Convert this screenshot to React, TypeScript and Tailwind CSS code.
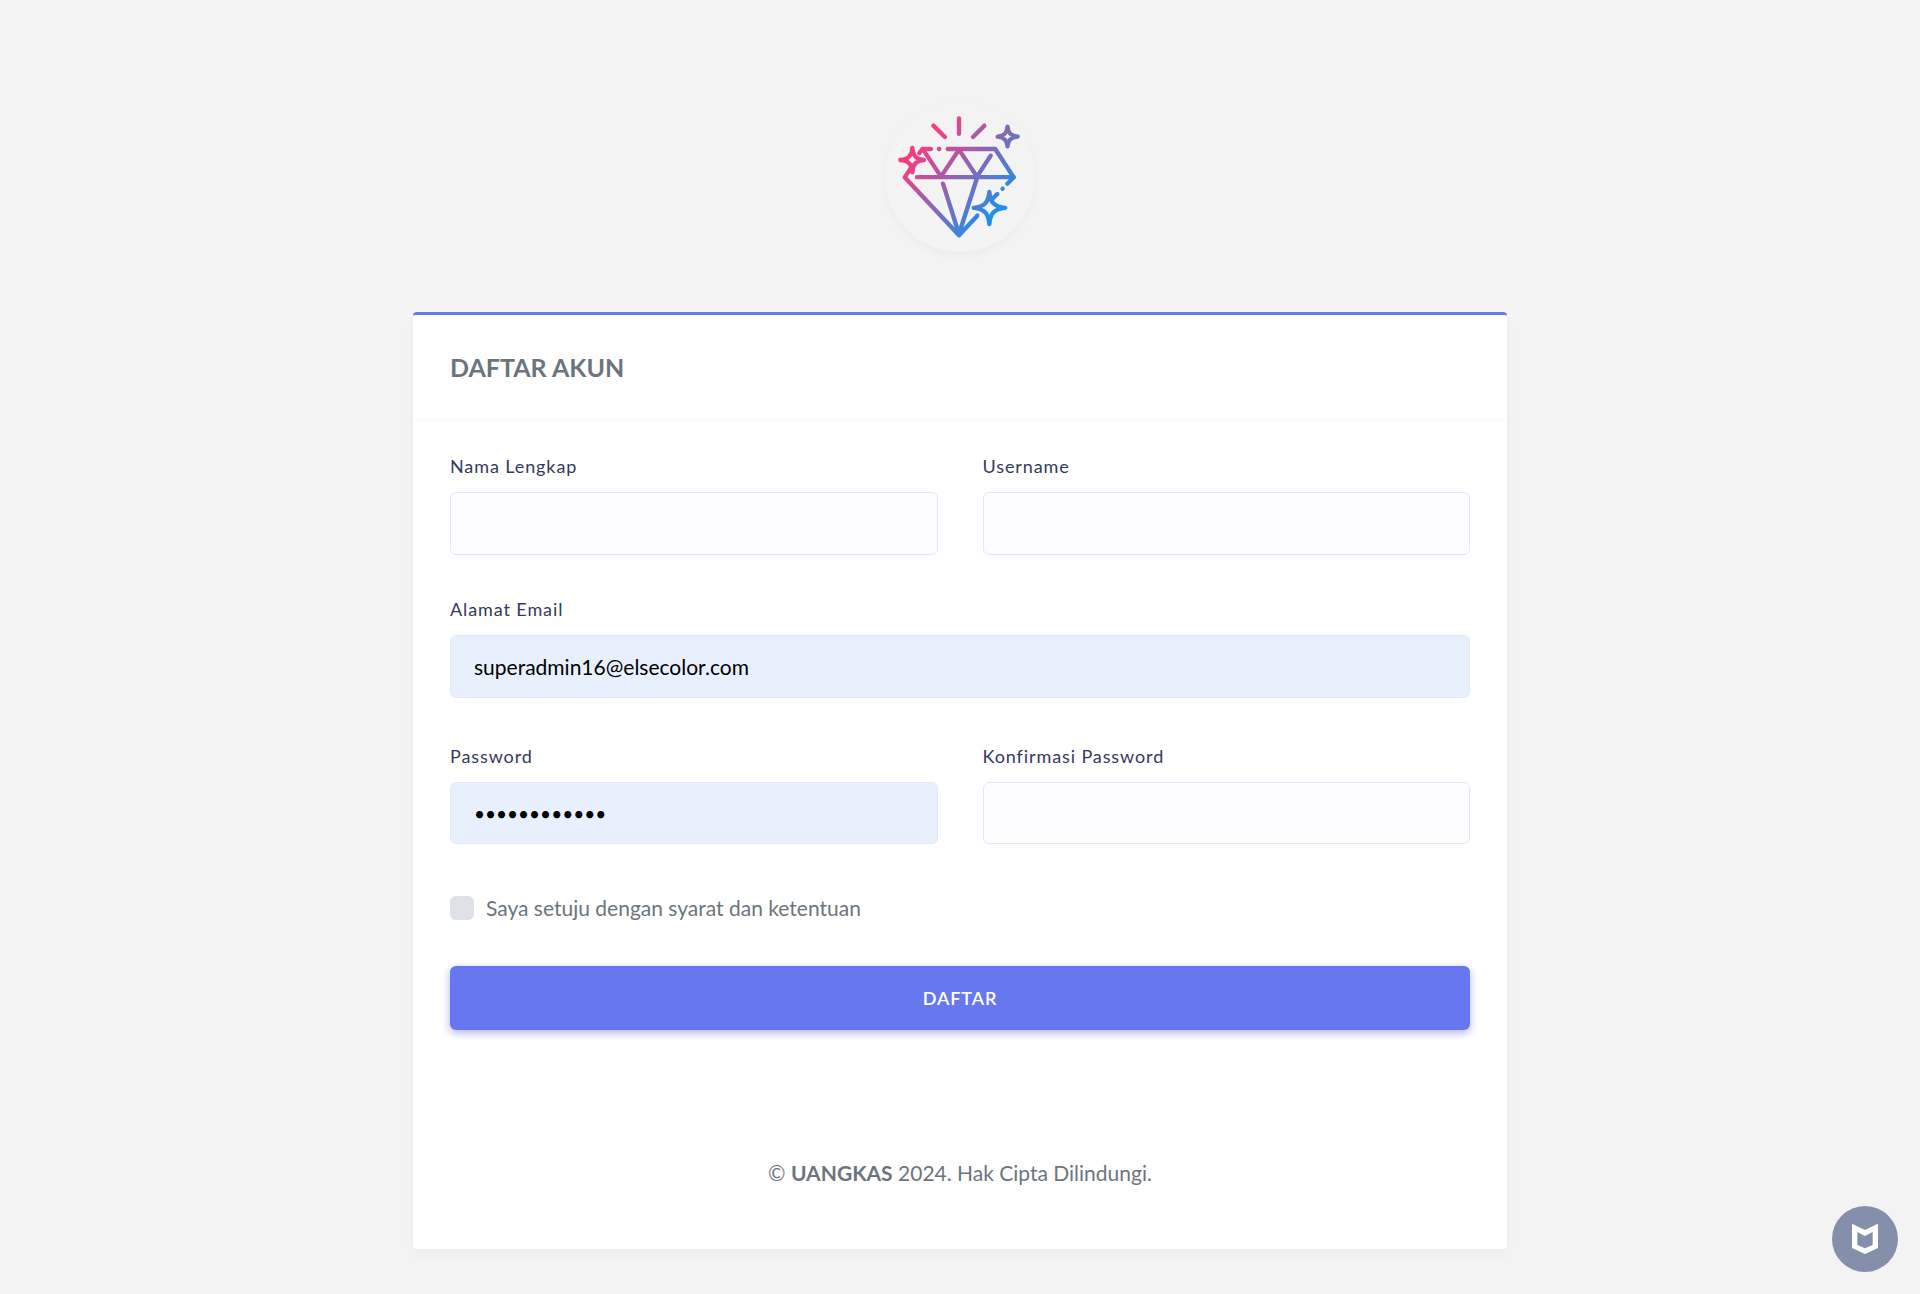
import React from "react";

const inputBase =
  "block w-full rounded-md border border-[#e4e6fc] px-[23px] leading-8 outline-none focus:border-[#95a0f4]";

type FieldProps = {
  id: string;
  label: string;
  type?: string;
  value?: string;
  className?: string;
};

function Field({ id, label, type = "text", value, className = "h-[63px] text-[21px]" }: FieldProps) {
  return (
    <div className="min-w-0 flex-1">
      <label
        htmlFor={id}
        className="mb-3 block text-lg leading-7 font-normal tracking-wider text-[#34395e]"
      >
        {label}
      </label>
      <input
        id={id}
        type={type}
        defaultValue={value}
        className={`${inputBase} ${className} ${value ? "bg-[#e8f0fe] text-black" : "bg-[#fdfdff] text-[#495057]"}`}
      />
    </div>
  );
}

function DiamondLogo() {
  return (
    <svg viewBox="45 36 450 450" className="size-full" fill="none" aria-label="Uangkas" role="img">
      <defs>
        <linearGradient id="gem" gradientUnits="userSpaceOnUse" x1="155" y1="165" x2="380" y2="370">
          <stop offset="0" stopColor="#f83c82" />
          <stop offset="1" stopColor="#1e90ea" />
        </linearGradient>
      </defs>
      <g stroke="url(#gem)" strokeWidth="13" strokeLinecap="round" strokeLinejoin="round">
        <path d="M267 85V131.500M190 107L225 141M343 107L309 141" />
        <path d="M183 177H157L148 190M206.500 177H208M233 177H376L431 262L412 281" />
        <path d="M431 261.500H141M127 226V247M124 232L104 262L267 436L322 377" />
        <path d="M161 181L213 260L267 179L321 260L362 197" />
        <path d="M219 281L267 432L321 264M397.500 296.500L398 296M382 312L366 328" />
        <path d="M127 174C129 198 139 208 162 210C139 212 129 222 127 244C125 222 115 212 91 210C115 208 125 198 127 174Z" />
        <path d="M412.500 110C414 130 422 138 443 140C422 142 414 150 412.500 169C411 150 403 142 383 140C403 138 411 130 412.500 110Z" />
        <path d="M358 306C361 338 373 350 406 353.500C373 357 361 369 358 402C355 369 343 357 311 353.500C343 350 355 338 358 306Z" />
      </g>
    </svg>
  );
}

function ShieldBadge() {
  return (
    <button
      type="button"
      aria-label="Keamanan"
      className="fixed right-[22px] bottom-[22px] size-[66px] rounded-full bg-[#848fac]"
    >
      <svg viewBox="96 78 198 198" className="size-full">
        <path
          fill="#fff"
          fillRule="evenodd"
          d="M156 131L195 150L234 131V204L195 222L156 204ZM172 156V195L195 205L218 195V156L195 168Z"
        />
      </svg>
    </button>
  );
}

export default function App() {
  return (
    <div className="flex min-h-screen flex-col items-center bg-[#f3f3f3] px-6 pt-[102px] pb-[45px] font-[Lato,'Noto_Sans',sans-serif] text-[21px] leading-9 text-[#6c757d]">
      <div className="mb-[60px] size-[150px] rounded-full shadow-[0_3px_9px_#e6ecf1]">
        <DiamondLogo />
      </div>

      <main className="w-full max-w-[1094px] rounded-[4px] border-t-3 border-[#6777ef] bg-white shadow-[0_6px_12px_rgba(0,0,0,0.03)]">
        <header className="border-b border-[#f9f9f9] px-[37px] py-[34px]">
          <h1 className="text-[25px] leading-9 font-bold">DAFTAR AKUN</h1>
        </header>

        <form className="px-[37px] pt-8" onSubmit={(e) => e.preventDefault()}>
          <div className="mb-10 flex gap-[45px]">
            <Field id="name" label="Nama Lengkap" />
            <Field id="username" label="Username" />
          </div>
          <div className="mb-11 flex">
            <Field id="email" label="Alamat Email" type="email" value="superadmin16@elsecolor.com" />
          </div>
          <div className="mb-[46px] flex gap-[45px]">
            <Field id="password" label="Password" type="password" value="rahasia12345" className="h-[62px] text-[19px]" />
            <Field id="confirm" label="Konfirmasi Password" type="password" className="h-[62px] text-[19px]" />
          </div>
          <div className="mb-10 flex items-center gap-3">
            <input
              id="agree"
              type="checkbox"
              className="size-6 appearance-none rounded-md bg-[#dee2e6] checked:bg-[#6777ef]"
            />
            <label htmlFor="agree">Saya setuju dengan syarat dan ketentuan</label>
          </div>
          <button
            type="submit"
            className="block h-16 w-full rounded-md bg-[#6777ef] text-lg font-semibold tracking-wider text-white shadow-[0_3px_9px_#acb5f6]"
          >
            DAFTAR
          </button>
        </form>

        <footer className="pt-[125px] pb-[58px] text-center">
          © <strong className="font-bold">UANGKAS</strong> 2024. Hak Cipta Dilindungi.
        </footer>
      </main>

      <ShieldBadge />
    </div>
  );
}
